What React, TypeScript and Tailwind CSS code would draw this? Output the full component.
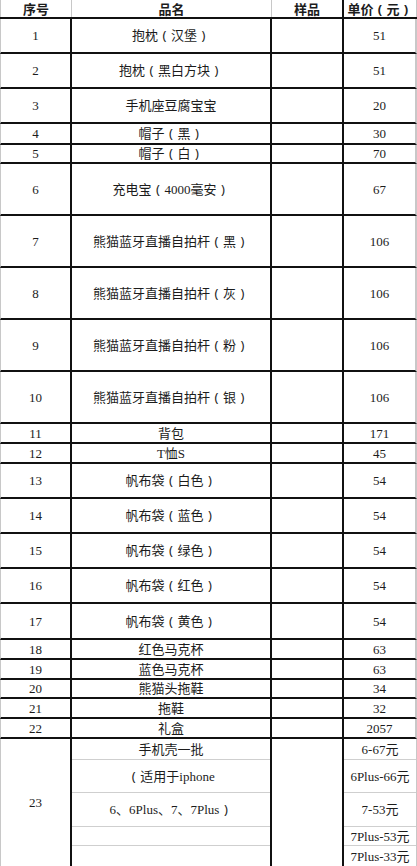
import React from 'react'

interface Row {
  no: string
  name: string
  price: string
  h: string
}

const rows: Row[] = [
  { no: '1', name: '抱枕（汉堡）', price: '51', h: 'h-[35px]' },
  { no: '2', name: '抱枕（黑白方块）', price: '51', h: 'h-[35px]' },
  { no: '3', name: '手机座豆腐宝宝', price: '20', h: 'h-[35px]' },
  { no: '4', name: '帽子（黑）', price: '30', h: 'h-[21px]' },
  { no: '5', name: '帽子（白）', price: '70', h: 'h-[19px]' },
  { no: '6', name: '充电宝（4000毫安）', price: '67', h: 'h-[52px]' },
  { no: '7', name: '熊猫蓝牙直播自拍杆（黑）', price: '106', h: 'h-[52px]' },
  { no: '8', name: '熊猫蓝牙直播自拍杆（灰）', price: '106', h: 'h-[52px]' },
  { no: '9', name: '熊猫蓝牙直播自拍杆（粉）', price: '106', h: 'h-[52px]' },
  { no: '10', name: '熊猫蓝牙直播自拍杆（银）', price: '106', h: 'h-[52px]' },
  { no: '11', name: '背包', price: '171', h: 'h-[20px]' },
  { no: '12', name: 'T恤S', price: '45', h: 'h-[20px]' },
  { no: '13', name: '帆布袋（白色）', price: '54', h: 'h-[35px]' },
  { no: '14', name: '帆布袋（蓝色）', price: '54', h: 'h-[35px]' },
  { no: '15', name: '帆布袋（绿色）', price: '54', h: 'h-[35px]' },
  { no: '16', name: '帆布袋（红色）', price: '54', h: 'h-[35px]' },
  { no: '17', name: '帆布袋（黄色）', price: '54', h: 'h-[36px]' },
  { no: '18', name: '红色马克杯', price: '63', h: 'h-[20px]' },
  { no: '19', name: '蓝色马克杯', price: '63', h: 'h-[20px]' },
  { no: '20', name: '熊猫头拖鞋', price: '34', h: 'h-[19px]' },
  { no: '21', name: '拖鞋', price: '32', h: 'h-[20px]' },
  { no: '22', name: '礼盒', price: '2057', h: 'h-[20px]' },
]

const subRows = [
  { name: '手机壳一批', price: '6-67元', h: 'h-[21px]' },
  { name: '（适用于iphone', price: '6Plus-66元', h: 'h-[33px]' },
  { name: '6、6Plus、7、7Plus）', price: '7-53元', h: 'h-[34px]' },
  { name: '', price: '7Plus-53元', h: 'h-[19px]' },
  { name: '', price: '7Plus-33元', h: 'h-[20px]' },
]

const cell = 'flex items-center justify-center border-b-2 border-r-2 border-[#111] whitespace-nowrap'

// full-width parens drawn centred in their em box, like the spreadsheet font
function Label({ text }: { text: string }) {
  const parts = text.split(/([（）])/)
  return (
    <span>
      {parts.map((p, i) =>
        p === '（' || p === '）' ? (
          <span
            key={i}
            className="inline-block w-[1em] text-center"
            style={{ fontFamily: '"Noto Sans", sans-serif' }}
          >
            {p === '（' ? '(' : ')'}
          </span>
        ) : (
          <span key={i}>{p}</span>
        )
      )}
    </span>
  )
}

export default function App() {
  return (
    <div
      className="w-[417px] bg-white text-[13px] leading-none text-[#1c1c1c]"
      style={{ fontFamily: '"Liberation Serif", "Noto Sans CJK SC", serif' }}
    >
      {/* Header */}
      <div
        className="flex h-[19px] border-b-2 border-[#111] font-bold text-[13px]"
        style={{ fontFamily: '"Noto Sans CJK SC", sans-serif' }}
      >
        <div className="flex w-[72px] items-center justify-center border-l border-r border-[#c8c8c8]">序号</div>
        <div className="flex w-[200px] items-center justify-center border-r border-[#c8c8c8]">品名</div>
        <div className="flex w-[72px] items-center justify-center border-r-2 border-[#111]">样品</div>
        <div className="flex w-[73px] items-center justify-center border-r border-[#c8c8c8]">
          <Label text="单价（元）" />
        </div>
      </div>

      {/* Body rows */}
      {rows.map(row => (
        <div key={row.no} className={`flex ${row.h}`}>
          <div className={`${cell} w-[72px] border-l border-l-[#c8c8c8]`}>{row.no}</div>
          <div className={`${cell} w-[200px]`}>
            <Label text={row.name} />
          </div>
          <div className={`${cell} w-[72px]`}></div>
          <div className={`${cell} w-[73px] border-r border-r-[#c8c8c8]`}>{row.price}</div>
        </div>
      ))}

      {/* Row 23 with sub rows */}
      <div className="flex">
        <div className={`${cell} w-[72px] border-l border-l-[#c8c8c8]`}>23</div>
        <div className="flex w-[200px] flex-col border-r-2 border-b-2 border-[#111]">
          {subRows.map((s, i) => (
            <div
              key={i}
              className={`flex items-center justify-center whitespace-nowrap ${s.h} ${i < subRows.length - 1 ? 'border-b border-[#cfcfcf]' : ''}`}
            >
              <Label text={s.name} />
            </div>
          ))}
        </div>
        <div className={`${cell} w-[72px]`}></div>
        <div className="flex w-[73px] flex-col border-r border-b-2 border-r-[#c8c8c8] border-b-[#111]">
          {subRows.map((s, i) => (
            <div
              key={i}
              className={`flex items-center justify-center whitespace-nowrap ${s.h} ${i < subRows.length - 1 ? 'border-b border-[#cfcfcf]' : ''}`}
            >
              {s.price}
            </div>
          ))}
        </div>
      </div>
    </div>
  )
}
